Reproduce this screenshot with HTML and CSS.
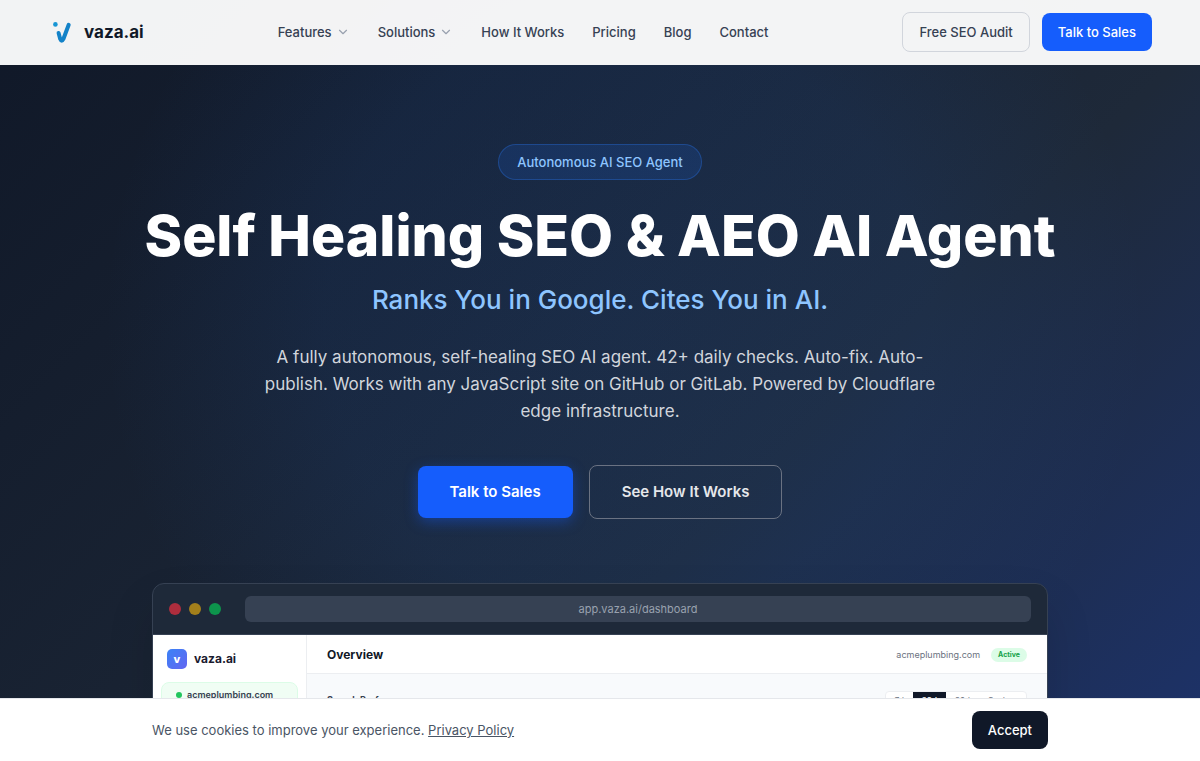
FILE: index.html
```html
<!DOCTYPE html>
<html lang="en">
<head>
<meta charset="utf-8">
<meta name="viewport" content="width=device-width, initial-scale=1">
<title>vaza.ai</title>
<link rel="stylesheet" href="styles.css">
</head>
<body>
<header class="site-header">
  <a class="brand" href="#">
    <svg class="brand-mark" viewBox="0 0 28 28" aria-hidden="true">
      <circle cx="7.400" cy="6.400" r="2.300" fill="#1795d4"/>
      <path d="M10.600 15L12.200 21Q13.700 24.600 15.400 21L20.700 6.800" fill="none" stroke="#1382c8" stroke-width="4" stroke-linecap="round" stroke-linejoin="round"/>
    </svg>
    <span>vaza.ai</span>
  </a>
  <nav class="nav" aria-label="Main">
    <button class="nav-item" type="button">Features <svg class="chevron" viewBox="0 0 24 24" aria-hidden="true"><path d="m6 9 6 6 6-6"/></svg></button>
    <button class="nav-item" type="button">Solutions <svg class="chevron" viewBox="0 0 24 24" aria-hidden="true"><path d="m6 9 6 6 6-6"/></svg></button>
    <a class="nav-item" href="#">How It Works</a>
    <a class="nav-item" href="#">Pricing</a>
    <a class="nav-item" href="#">Blog</a>
    <a class="nav-item" href="#">Contact</a>
  </nav>
  <div class="header-actions">
    <a class="btn btn-outline" href="#">Free SEO Audit</a>
    <a class="btn btn-primary" href="#">Talk to Sales</a>
  </div>
</header>
<main class="hero">
  <p class="badge">Autonomous AI SEO Agent</p>
  <h1 class="title">Self Healing SEO &amp; AEO AI Agent</h1>
  <p class="subtitle">Ranks You in Google. Cites You in AI.</p>
  <p class="lead">A fully autonomous, self-healing SEO AI agent. 42+ daily checks. Auto-fix. Auto-publish. Works with any JavaScript site on GitHub or GitLab. Powered by Cloudflare edge infrastructure.</p>
  <div class="cta">
    <a class="btn btn-large btn-primary btn-glow" href="#">Talk to Sales</a>
    <a class="btn btn-large btn-ghost" href="#">See How It Works</a>
  </div>
  <section class="window" aria-label="Dashboard preview">
    <div class="window-bar">
      <div class="dots"><span class="dot dot-red"></span><span class="dot dot-yellow"></span><span class="dot dot-green"></span></div>
      <div class="address">app.vaza.ai/dashboard</div>
    </div>
    <div class="dashboard">
      <aside class="sidebar">
        <div class="side-brand"><span class="side-mark">v</span>vaza.ai</div>
        <div class="site-card"><span class="status-dot"></span>acmeplumbing.com</div>
      </aside>
      <div class="panel">
        <div class="panel-head">
          <h2 class="panel-title">Overview</h2>
          <div class="panel-meta"><span>acmeplumbing.com</span><span class="pill">Active</span></div>
        </div>
        <div class="panel-body">
          <h3 class="section-title">Search Performance</h3>
          <div class="ranges">
            <button class="range" type="button">7d</button>
            <button class="range range-on" type="button">28d</button>
            <button class="range" type="button">90d</button>
            <button class="range" type="button">Custom</button>
          </div>
        </div>
      </div>
    </div>
  </section>
</main>
<footer class="cookies">
  <p class="cookie-text">We use cookies to improve your experience. <a class="cookie-link" href="#">Privacy Policy</a></p>
  <button class="btn btn-dark" type="button">Accept</button>
</footer>
</body>
</html>
```
FILE: styles.css
```css
* { box-sizing: border-box; }
body, h1, h2, h3, p { margin: 0; }
body {
  height: 100vh;
  display: flex;
  flex-direction: column;
  overflow: hidden;
  font-family: Inter, "Liberation Sans", sans-serif;
  font-size: 13px;
  line-height: 20px;
  background:
    radial-gradient(circle at 52% 320px, rgba(30, 100, 210, 0.12), rgba(30, 100, 210, 0.1) 300px, rgba(30, 100, 210, 0) 520px) no-repeat,
    linear-gradient(135deg, #101828, #1e2939 50%, #1c398e) 0 0 / 100% 1280px no-repeat;
}
a { color: inherit; text-decoration: none; }
button { font: inherit; color: inherit; border: 0; background: none; padding: 0; cursor: pointer; }

.site-header {
  display: flex;
  align-items: center;
  justify-content: space-between;
  flex: none;
  height: 65px;
  padding: 0 48px;
  border-bottom: 1px solid transparent;
  background: rgba(255, 255, 255, 0.95);
}
.brand { display: flex; align-items: center; gap: 8px; color: #101828; font-size: 17px; font-weight: 700; line-height: 28px; }
.brand-mark { width: 28px; height: 28px; }
.nav { display: flex; gap: 28px; color: #364153; font-weight: 500; }
.nav-item { display: flex; align-items: center; gap: 4px; }
.chevron { width: 14px; height: 14px; fill: none; stroke: #99a1af; stroke-width: 2; stroke-linecap: round; stroke-linejoin: round; }
.header-actions { display: flex; align-items: center; gap: 12px; }

.btn { padding: 9px 16px; border-radius: 8px; font-weight: 500; }
.btn-outline { border: 1px solid #d1d5dc; color: #364153; }
.btn-primary { background: #155dfc; color: #fff; }
.btn-large { padding: 14px 32px; font-size: 15px; line-height: 24px; font-weight: 600; }
.btn-glow { box-shadow: 0 4px 14px rgba(21, 93, 252, 0.4); }
.btn-ghost { border: 1px solid #6a7282; color: #e5e7eb; }
.btn-dark { background: #101828; color: #fff; }

.hero {
  flex: 1;
  min-height: 0;
  display: flex;
  flex-direction: column;
  align-items: center;
  padding: 79px 48px 0;
  overflow: hidden;
  text-align: center;
}
.hero > * { flex: none; }
.badge {
  padding: 7px 18px;
  border: 1px solid rgba(43, 127, 255, 0.3);
  border-radius: 18px;
  background: rgba(30, 100, 220, 0.18);
  color: #8ec5ff;
  font-weight: 500;
}
.title { margin-top: 20px; color: #fff; font-size: 57px; line-height: 72px; font-weight: 800; }
.subtitle { margin-top: 8px; color: #8ec5ff; font-size: 26px; line-height: 40px; font-weight: 500; }
.lead { max-width: 672px; margin-top: 24px; color: #d1d5dc; font-size: 17px; line-height: 27px; }
.cta { display: flex; align-items: center; gap: 16px; margin-top: 40px; }

.window {
  width: 100%;
  max-width: 896px;
  margin-top: 64px;
  border: 1px solid #364153;
  border-radius: 12px 12px 0 0;
  background: #1e2939;
  overflow: hidden;
  text-align: left;
  box-shadow: 0 24px 48px rgba(0, 0, 0, 0.12);
}
.window-bar { display: flex; align-items: center; gap: 24px; padding: 12px 16px; border-bottom: 1px solid #364153; }
.dots { display: flex; gap: 8px; }
.dot { width: 12px; height: 12px; border-radius: 50%; }
.dot-red { background: #ae2d3d; }
.dot-yellow { background: #a37f1b; }
.dot-green { background: #0d944c; }
.address { flex: 1; padding: 4px; border-radius: 6px; background: #364153; color: #99a1af; font-size: 11px; line-height: 18px; text-align: center; }
.dashboard { display: flex; min-height: 400px; background: #fff; }
.sidebar { width: 154px; padding: 14px 8px; border-right: 1px solid #eceef1; }
.side-brand { display: flex; align-items: center; gap: 7px; padding-left: 6px; color: #1a1a2e; font-size: 12px; font-weight: 700; }
.side-mark { width: 20px; height: 20px; border-radius: 5px; background: linear-gradient(135deg, #3b82f6, #6366f1); color: #fff; font-size: 11px; font-weight: 800; text-align: center; }
.site-card { display: flex; align-items: center; gap: 5px; margin-top: 13px; padding: 4px 14px 12px; border: 1px solid #dcfce7; border-radius: 8px; background: #f0fdf4; color: #374151; font-size: 9px; line-height: 16px; font-weight: 600; }
.status-dot { width: 6px; height: 6px; border-radius: 50%; background: #22c55e; }
.panel { flex: 1; background: #f8fafc; }
.panel-head { display: flex; align-items: center; justify-content: space-between; padding: 10px 20px 8px; border-bottom: 1px solid #eceef1; background: #fff; }
.panel-title { color: #111827; font-size: 12px; line-height: 20px; font-weight: 700; }
.panel-meta { display: flex; align-items: center; gap: 11px; color: #6b7280; font-size: 9px; }
.pill { padding: 0 7px; border-radius: 7px; background: #dcfce7; color: #16a34a; font-size: 7px; line-height: 14px; font-weight: 700; }
.panel-body { display: flex; align-items: flex-start; justify-content: space-between; padding: 17px 20px; }
.section-title { color: #374151; font-size: 9px; line-height: 18px; font-weight: 700; }
.ranges { display: flex; border: 1px solid #eceef1; border-radius: 4px; background: #fff; overflow: hidden; }
.range { padding: 0 9px; color: #6b7280; font-size: 8px; line-height: 16px; }
.range-on { background: #101828; color: #fff; font-weight: 600; }

.cookies {
  display: flex;
  align-items: center;
  justify-content: space-between;
  flex: none;
  padding: 12px max(48px, calc(50% - 448px));
  border-top: 1px solid #e5e7eb;
  background: #fff;
}
.cookie-text { color: #4a5565; }
.cookie-link { text-decoration: underline; }
```
